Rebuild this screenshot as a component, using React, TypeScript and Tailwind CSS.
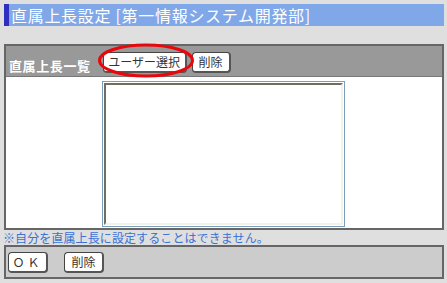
import React from 'react'

const jp = { fontFamily: '"Noto Sans CJK JP", "Noto Sans", sans-serif' }

function OldButton({ label, className = '' }: { label: string; className?: string }) {
    return (
        <button
            className={`h-[21px] rounded-[4px] bg-white border border-[#444] border-r-[2px] border-b-[2px] border-r-[#555] border-b-[#555] text-[12px] leading-none text-[#333] ${className}`}
            style={jp}
        >
            {label}
        </button>
    )
}

export default function App() {
    return (
        <div className="w-[447px] h-[283px] bg-[#dfdfdf] pt-[4px] pl-[4px] pr-[3px] overflow-hidden" style={jp}>
            {/* title */}
            <div className="h-[22px] bg-[#80a8e8] border-l-[5px] border-[#2f2fbf] flex items-center pl-[2px]">
                <span className="text-white text-[16px] leading-none tracking-[0.7px]">直属上長設定 [第一情報システム開発部]</span>
            </div>

            {/* user list panel */}
            <div className="mt-[18px] border-2 border-[#666]">
                <div className="relative h-[31px] bg-[#999] border-b border-[#777] flex items-center pl-[3px]">
                    <span className="text-white font-bold text-[13px] tracking-[0.6px] mt-[10px]">直属上長一覧</span>
                    <OldButton label="ユーザー選択" className="ml-[12px] mt-[3px] w-[84px] text-[12.5px]" />
                    <OldButton label="削除" className="ml-[5px] mt-[3px] w-[39px]" />
                    <svg className="absolute left-[91px] top-[-3px]" width="98" height="35" viewBox="0 0 98 35">
                        <ellipse cx="49" cy="17.5" rx="46.5" ry="15.5" fill="none" stroke="#e8080c" strokeWidth="3" />
                    </svg>
                </div>
                <div className="h-[151px] bg-white pt-[4px] pl-[96px]">
                    <div className="w-[243px] h-[146px] border border-[#7b9dc0] p-[1px]">
                        <div className="w-full h-full border-2 border-t-[#6f6f60] border-l-[#6f6f60] border-r-[#f2f2e6] border-b-[#f2f2e6] bg-white" />
                    </div>
                </div>
            </div>

            {/* note */}
            <p className="text-[12px] leading-[15px] text-[#3a72d6] -ml-[1px] tracking-[0.1px]">※自分を直属上長に設定することはできません。</p>

            {/* bottom panel */}
            <div className="h-[34px] bg-[#cccccc] border-2 border-[#666] flex items-center pl-[2px]">
                <OldButton label="ＯＫ" className="w-[40px] tracking-[3px]" />
                <OldButton label="削除" className="ml-[16px] w-[40px]" />
            </div>
        </div>
    )
}
